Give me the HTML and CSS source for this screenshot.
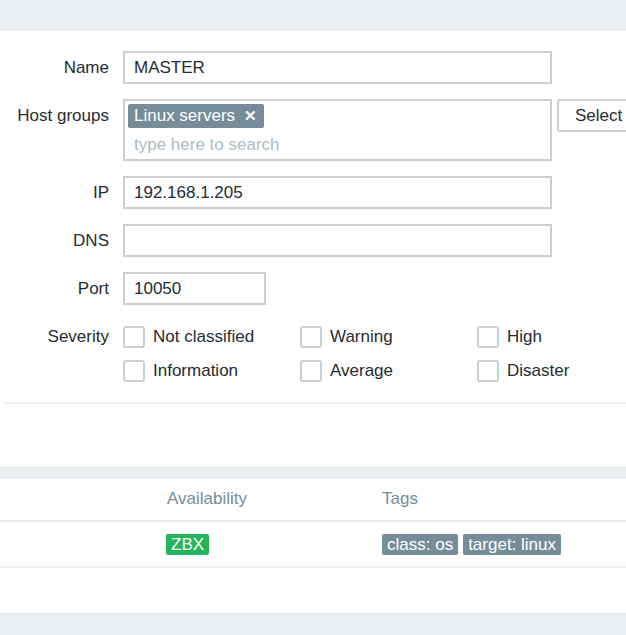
FILE: index.html
```html
<!DOCTYPE html>
<html>
<head>
<meta charset="utf-8">
<link rel="stylesheet" href="styles.css">
</head>
<body>
<div class="band band-top"></div>
<section class="form">
  <div class="row">
    <label class="lbl">Name</label>
    <div class="field"><div class="input">MASTER</div></div>
  </div>
  <div class="row">
    <label class="lbl">Host groups</label>
    <div class="field hg">
      <div class="multi">
        <span class="chip">Linux servers <span class="x">✕</span></span>
        <span class="ph">type here to search</span>
      </div>
      <div class="btn">Select</div>
    </div>
  </div>
  <div class="row">
    <label class="lbl">IP</label>
    <div class="field"><div class="input">192.168.1.205</div></div>
  </div>
  <div class="row">
    <label class="lbl">DNS</label>
    <div class="field"><div class="input"></div></div>
  </div>
  <div class="row">
    <label class="lbl">Port</label>
    <div class="field"><div class="input short">10050</div></div>
  </div>
  <div class="row sev">
    <label class="lbl">Severity</label>
    <div class="field checks">
      <div class="chk"><span class="box"></span>Not classified</div>
      <div class="chk"><span class="box"></span>Warning</div>
      <div class="chk"><span class="box"></span>High</div>
      <div class="chk"><span class="box"></span>Information</div>
      <div class="chk"><span class="box"></span>Average</div>
      <div class="chk"><span class="box"></span>Disaster</div>
    </div>
  </div>
  <div class="sep"></div>
</section>
<div class="band band-mid"></div>
<section class="table">
  <div class="trow thead">
    <span>Availability</span>
    <span>Tags</span>
  </div>
  <div class="trow tbody">
    <span><span class="badge zbx">ZBX</span></span>
    <span class="tags"><span class="badge tag">class: os</span><span class="badge tag">target: linux</span></span>
  </div>
</section>
<div class="band band-bottom"></div>
</body>
</html>
```
FILE: styles.css
```css
html, body {
  margin: 0;
  padding: 0;
  background: #fff;
  width: 626px;
  height: 635px;
  overflow: hidden;
  font-family: "Liberation Sans", Arial, sans-serif;
  font-size: 17px;
  color: #1f2c33;
}
.band {
  background: #ebeef0;
}
.band-top {
  height: 29px;
  border-bottom: 1px solid #dde2e5;
}
.band-mid {
  height: 9px;
  border-top: 1px solid #dde2e5;
  border-bottom: 1px solid #dde2e5;
}
.band-bottom {
  height: 23px;
  border-top: 1px solid #dde2e5;
}
.form {
  padding-top: 21px;
  display: flex;
  flex-direction: column;
  gap: 15px;
}
.row {
  display: grid;
  grid-template-columns: 109px 1fr;
  column-gap: 14px;
  align-items: start;
}
.lbl {
  text-align: right;
  line-height: 33px;
  white-space: nowrap;
}
.input {
  box-sizing: border-box;
  width: 429px;
  height: 33px;
  border: 2px solid #c8d0d5;
  padding: 0 9px;
  line-height: 29px;
  background: #fff;
}
.input.short {
  width: 143px;
}
.hg {
  display: flex;
  gap: 5px;
  align-items: flex-start;
}
.multi {
  box-sizing: border-box;
  width: 429px;
  height: 62px;
  flex: none;
  border: 2px solid #c8d0d5;
  padding: 3px 3px 0 3px;
  display: flex;
  flex-direction: column;
  align-items: flex-start;
}
.chip {
  display: inline-flex;
  align-items: center;
  height: 24px;
  padding: 0 7px 0 6px;
  background: #768d99;
  color: #fff;
  border-radius: 2px;
  white-space: nowrap;
}
.chip .x {
  margin-left: 9px;
  font-weight: bold;
  font-size: 15px;
}
.ph {
  color: #acbbc2;
  margin: 7px 0 0 6px;
}
.btn {
  box-sizing: border-box;
  flex: none;
  width: 90px;
  height: 33px;
  border: 2px solid #c8d0d5;
  border-radius: 2px;
  padding-left: 16px;
  line-height: 29px;
  white-space: nowrap;
}
.sev {
  margin-top: 6px;
}
.sev .lbl {
  line-height: 22px;
}
.checks {
  display: grid;
  grid-template-columns: 177px 177px 1fr;
  row-gap: 12px;
}
.chk {
  display: flex;
  align-items: center;
  gap: 8px;
  height: 22px;
  white-space: nowrap;
}
.box {
  box-sizing: border-box;
  width: 22px;
  height: 22px;
  border: 2px solid #c8d0d5;
  border-radius: 3px;
  background: #fff;
}
.sep {
  margin: 5px 0 63px 3px;
  height: 2px;
  background: #eff1f2;
}
.trow {
  display: grid;
  grid-template-columns: 215px 1fr;
  padding-left: 167px;
  align-items: center;
}
.thead {
  height: 42px;
  color: #768d99;
  border-bottom: 2px solid #e6eaec;
}
.tbody {
  height: 44px;
  border-bottom: 2px solid #eff1f2;
  margin-bottom: 45px;
}
.badge {
  display: inline-block;
  height: 21px;
  line-height: 21px;
  padding: 0 5px;
  border-radius: 2px;
  color: #fff;
}
.zbx {
  background: #26b35a;
  padding: 0 5px;
  margin-left: -1px;
}
.tags {
  display: flex;
  gap: 5px;
}
.tag {
  background: #768d99;
  padding: 0 5px;
}
```
